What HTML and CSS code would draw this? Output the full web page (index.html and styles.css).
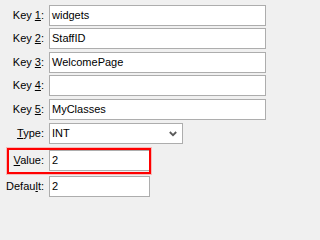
FILE: index.html
```html
<!DOCTYPE html>
<html>
<head>
<meta charset="utf-8">
<link rel="stylesheet" href="styles.css">
</head>
<body>
<div class="form">
  <div class="row"><span class="lbl">Key <u>1</u>:</span><div class="field wide">widgets</div></div>
  <div class="row g2"><span class="lbl">Key <u>2</u>:</span><div class="field wide">StaffID</div></div>
  <div class="row g3"><span class="lbl">Key <u>3</u>:</span><div class="field wide">WelcomePage</div></div>
  <div class="row g2"><span class="lbl">Key <u>4</u>:</span><div class="field wide"></div></div>
  <div class="row g3"><span class="lbl">Key <u>5</u>:</span><div class="field wide">MyClasses</div></div>
  <div class="row g3"><span class="lbl"><u>T</u>ype:</span><div class="field combo"><span>INT</span><svg class="chev" width="8" height="6" viewBox="0 0 8 6"><path d="M0.8 1 L4 4.2 L7.2 1" fill="none" stroke="#5a5a5a" stroke-width="1.8"/></svg></div></div>
  <div class="row g6"><span class="lbl"><u>V</u>alue:</span><div class="field small">2</div></div>
  <div class="row g5"><span class="lbl">Defau<u>l</u>t:</span><div class="field small">2</div></div>
  <div class="highlight"></div>
</div>
</body>
</html>
```

FILE: styles.css
```css
html, body {
  margin: 0;
  padding: 0;
  background: #f0f0f0;
}
body {
  font-family: "Liberation Sans", Arial, sans-serif;
  font-size: 11px;
  color: #000;
}
.form {
  position: relative;
  padding-top: 5px;
  display: flex;
  flex-direction: column;
}
.row {
  display: flex;
  align-items: center;
  height: 21px;
}
.g2 { margin-top: 2px; }
.g3 { margin-top: 3px; }
.g5 { margin-top: 5px; }
.g6 { margin-top: 6px; }
.lbl {
  width: 44px;
  text-align: right;
  margin-right: 5px;
  line-height: 21px;
  white-space: nowrap;
}
.lbl u {
  text-underline-offset: 1px;
}
.field {
  box-sizing: border-box;
  height: 21px;
  border: 1px solid #adadad;
  background: #fff;
  padding: 0 2px;
  line-height: 19px;
  white-space: nowrap;
}
.wide { width: 217px; }
.small { width: 101px; }
.combo {
  width: 134px;
  display: flex;
  align-items: center;
  justify-content: space-between;
  padding-right: 5px;
}
.chev { display: block; }
.highlight {
  position: absolute;
  left: 7px;
  top: 148px;
  width: 144px;
  height: 26px;
  box-sizing: border-box;
  border: 2px solid #ff0000;
  box-shadow: 0 0 0 1px rgba(255, 90, 90, 0.35);
}
```
